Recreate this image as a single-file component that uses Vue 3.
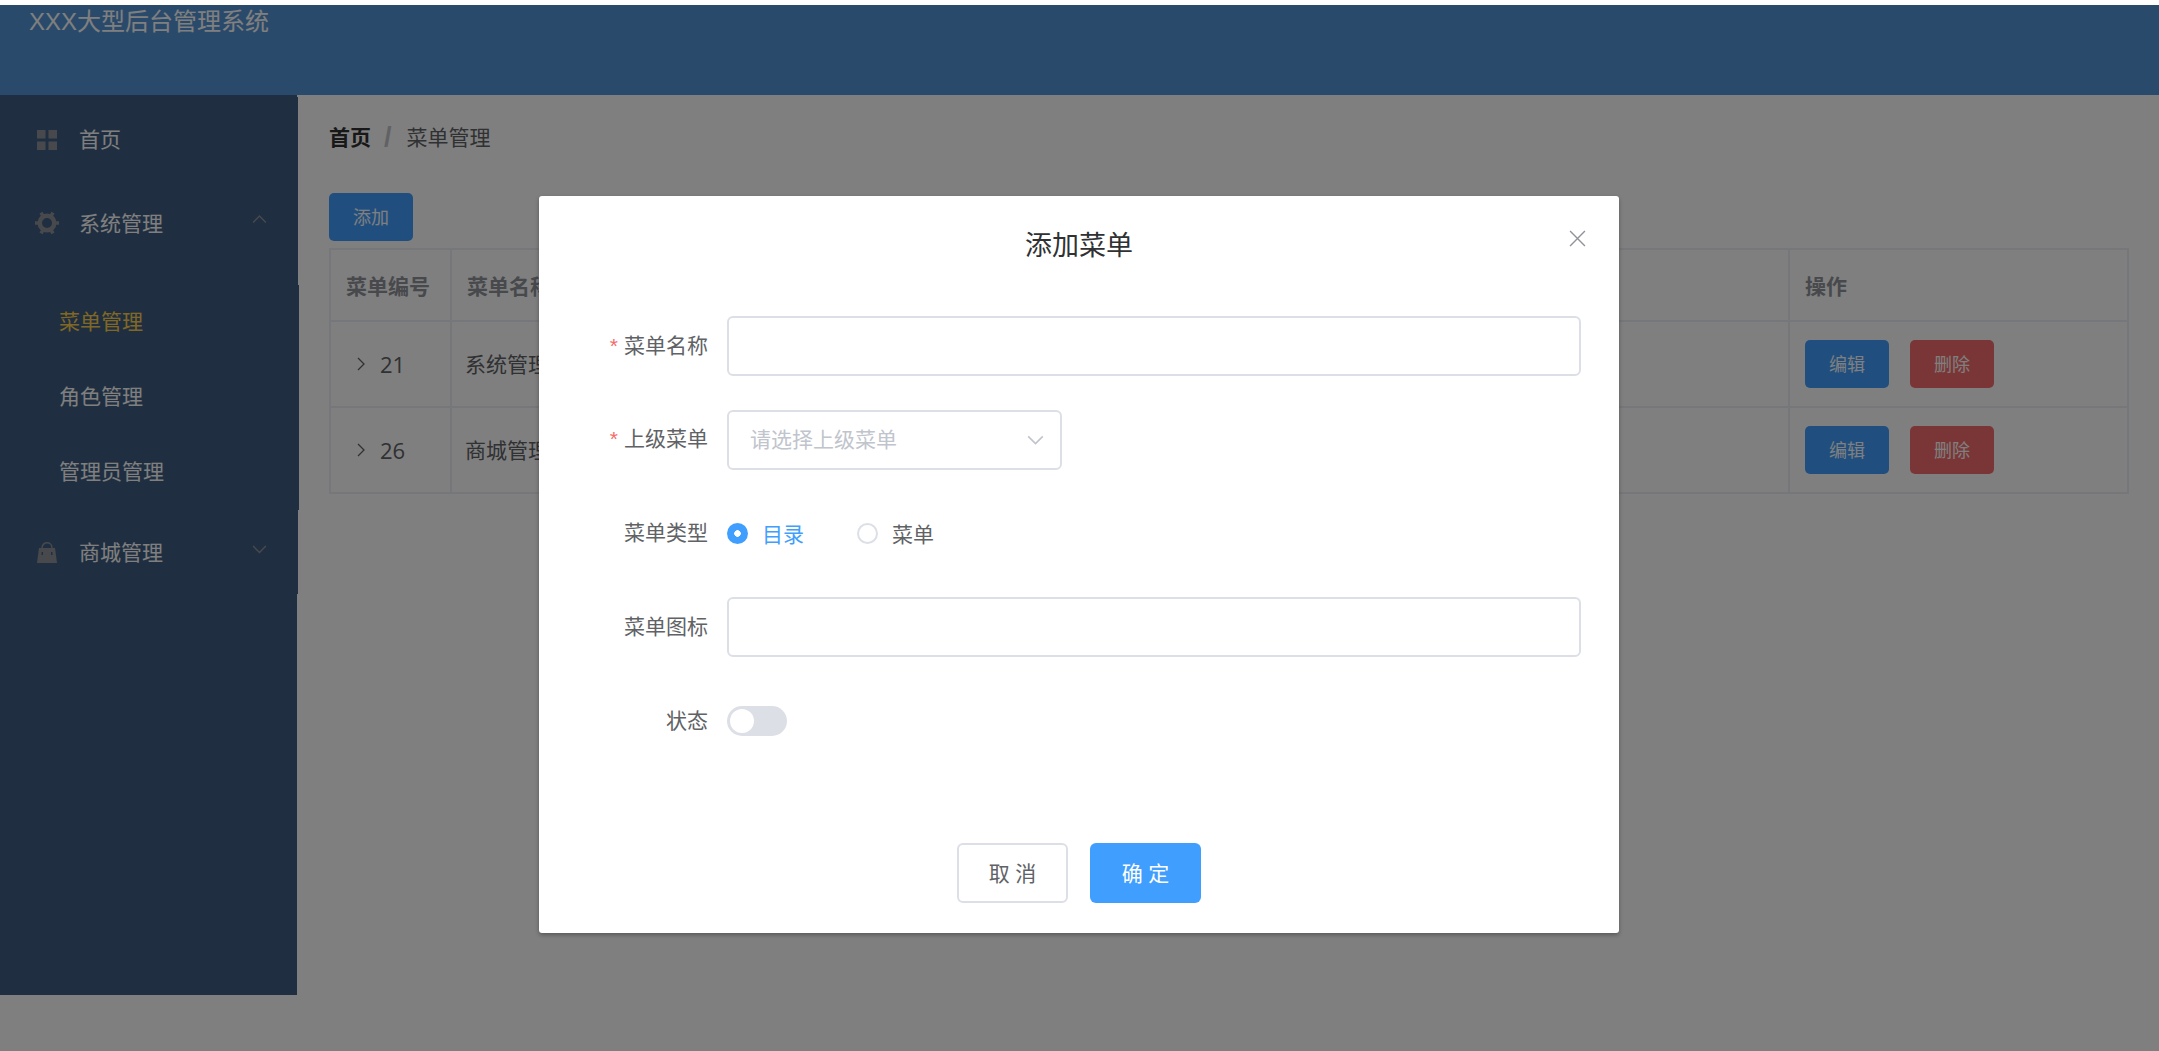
<template>
  <div class="page">
    <header class="topbar">
      <span class="logo">XXX大型后台管理系统</span>
    </header>

    <div class="main">
      <!-- SIDEBAR -->
      <aside class="aside">
        <div class="menu-title">
          <svg class="menu-icon grid" viewBox="0 0 20 20" aria-hidden="true">
            <path d="M0 0h8.500v8.500H0zM11.500 0H20v8.500h-8.500zM0 11.500h8.500V20H0zM11.500 11.500H20V20h-8.500z" />
          </svg>
          <span>首页</span>
        </div>

        <div class="menu-title open">
          <svg class="menu-icon gear" viewBox="0 0 24 24" aria-hidden="true">
            <circle cx="12" cy="12" r="7.250" />
            <line v-for="deg in teeth" :key="deg" x1="19" y1="12" x2="24" y2="12" :transform="`rotate(${deg} 12 12)`" />
          </svg>
          <span>系统管理</span>
          <svg class="arrow" viewBox="0 0 14 8" aria-hidden="true"><path d="M1 7l6-6 6 6" /></svg>
        </div>

        <ul class="submenu">
          <li v-for="item in subMenus" :key="item" :class="{ active: item === '菜单管理' }">{{ item }}</li>
        </ul>

        <div class="menu-title">
          <svg class="menu-icon bag" viewBox="0 0 20 21" aria-hidden="true">
            <path fill-rule="evenodd" d="M2 6h16l2 15H0zM4.500 10v3H6v-3zM14 10v3h1.500v-3z" />
            <path class="handle" d="M5 6C5 2.500 7.500.8 10 .8s5 1.700 5 5.200" />
          </svg>
          <span>商城管理</span>
          <svg class="arrow down" viewBox="0 0 14 8" aria-hidden="true"><path d="M1 1l6 6 6-6" /></svg>
        </div>
      </aside>

      <!-- CONTENT -->
      <main class="content">
        <div class="breadcrumb">
          <b>首页</b>
          <i>/</i>
          <span>菜单管理</span>
        </div>

        <button class="btn small primary add">添加</button>

        <table class="table">
          <colgroup>
            <col class="col-id" />
            <col />
            <col class="col-op" />
          </colgroup>
          <thead>
            <tr>
              <th>菜单编号</th>
              <th>菜单名称</th>
              <th>操作</th>
            </tr>
          </thead>
          <tbody>
            <tr v-for="row in rows" :key="row.id">
              <td>
                <div class="id-cell">
                  <svg class="expand" viewBox="0 0 8 14" aria-hidden="true"><path d="M1 1l6 6-6 6" /></svg>
                  <span>{{ row.id }}</span>
                </div>
              </td>
              <td class="name">{{ row.name }}</td>
              <td>
                <div class="ops">
                  <button class="btn small primary">编辑</button>
                  <button class="btn small danger">删除</button>
                </div>
              </td>
            </tr>
          </tbody>
        </table>
      </main>
    </div>

    <!-- DIALOG -->
    <div class="mask">
      <div class="dialog">
        <div class="dialog-head">
          <span>添加菜单</span>
          <svg class="close" viewBox="0 0 16 16" aria-hidden="true"><path d="M1 1l14 14M15 1L1 15" /></svg>
        </div>

        <form class="form">
          <div class="row">
            <label class="required">菜单名称</label>
            <div class="input"></div>
          </div>
          <div class="row">
            <label class="required">上级菜单</label>
            <div class="input select">
              <span>请选择上级菜单</span>
              <svg viewBox="0 0 14 8" aria-hidden="true"><path d="M1 1l6 6 6-6" /></svg>
            </div>
          </div>
          <div class="row">
            <label>菜单类型</label>
            <div class="radios">
              <span class="radio checked"><i></i><em>目录</em></span>
              <span class="radio"><i></i><em>菜单</em></span>
            </div>
          </div>
          <div class="row">
            <label>菜单图标</label>
            <div class="input"></div>
          </div>
          <div class="row">
            <label>状态</label>
            <span class="switch"><i></i></span>
          </div>
        </form>

        <div class="dialog-foot">
          <button class="btn plain">取 消</button>
          <button class="btn primary">确 定</button>
        </div>
      </div>
    </div>
  </div>
</template>

<script setup>
const subMenus = ['菜单管理', '角色管理', '管理员管理']
const teeth = [0, 60, 120, 180, 240, 300]

const rows = [
  { id: 21, name: '系统管理' },
  { id: 26, name: '商城管理' },
]
</script>

<style scoped>
.page {
  position: relative;
  height: 1051px;
  overflow: hidden;
  background: #fff;
  font-family: "Open Sans", "Noto Sans CJK SC", sans-serif;
  font-size: 21px;
  color: #606266;
}

.topbar {
  height: 90px;
  margin-top: 5px;
  padding-left: 29px;
  background: #5494d6;
  color: #fff;
}
.logo {
  display: block;
  font-family: "Liberation Sans", "Noto Sans CJK SC", sans-serif;
  font-size: 24px;
  line-height: 34px;
}

.main { display: flex; align-items: flex-start; }

/* SIDEBAR */
.aside {
  width: 297px;
  height: 900px;
  flex-shrink: 0;
  background: #3e5e82;
  color: #fff;
}
.menu-title {
  position: relative;
  display: flex;
  align-items: center;
  width: 298px;
  height: 84px;
  padding: 0 0 2px 79px;
  box-sizing: border-box;
  background: #3e5e82;
}
.menu-title:first-child { margin-top: 2px; }
.menu-title.open { height: 104px; padding-bottom: 22px; }
.menu-icon {
  position: absolute;
  left: 37px;
  top: 33px;
  width: 20px;
  height: 20px;
  fill: #909399;
}
.gear {
  left: 35px;
  top: 30px;
  width: 24px;
  height: 24px;
  fill: none;
  stroke: #909399;
  stroke-width: 4.500;
}
.gear line { stroke-width: 3.500; }
.bag { top: 32px; height: 21px; }
.handle { fill: none; stroke: #909399; stroke-width: 1.500; }
.arrow {
  position: absolute;
  left: 252px;
  top: 34px;
  width: 15px;
  height: 8.500px;
  fill: none;
  stroke: #909399;
  stroke-width: 1.300;
}
.arrow.down { top: 35px; }
.submenu {
  width: 299px;
  margin: 0;
  padding: 0;
  background: #3e5e82;
  list-style: none;
}
.submenu li {
  height: 75px;
  padding-left: 59px;
  line-height: 73px;
}
.submenu li.active { color: #ffd04b; }

/* CONTENT */
.content {
  flex: 1;
  min-width: 0;
  padding: 0 30px 0 32px;
}
.breadcrumb {
  display: flex;
  align-items: center;
  height: 30px;
  margin-top: 26px;
}
.breadcrumb b { color: #303133; font-weight: 700; }
.breadcrumb i {
  margin: 2px 15px 0 13px;
  color: #c0c4cc;
  font-family: "Liberation Sans", sans-serif;
  font-size: 27px;
  font-style: normal;
  font-weight: 700;
}
.add { display: block; margin-top: 42px; margin-bottom: 7px; }

.btn {
  box-sizing: border-box;
  width: 111px;
  height: 60px;
  padding: 0 0 2px;
  border: 0;
  border-radius: 6px;
  font-family: inherit;
  font-size: 21px;
  cursor: pointer;
}
.btn.small { width: 84px; height: 48px; padding-bottom: 3px; font-size: 18px; border-radius: 5px; }
.btn.primary { background: #409eff; color: #fff; }
.btn.danger { background: #f56c6c; color: #fff; }
.btn.plain { background: #fff; border: 2px solid #dcdfe6; color: #606266; }

.table {
  width: 1800px;
  table-layout: fixed;
  border-collapse: collapse;
  border: 2px solid #ebeef5;
}
.col-id { width: 121px; }
.col-op { width: 339px; }
.table th, .table td {
  box-sizing: border-box;
  padding: 0 15px;
  border: 2px solid #ebeef5;
  text-align: left;
}
.table th { height: 72px; padding-bottom: 1px; color: #909399; font-weight: 700; }
.table td { height: 86px; }
.table td.name { padding: 0 13px 3px; }
.id-cell { display: flex; align-items: center; gap: 15px; padding: 0 0 1px 11px; }
.id-cell span { font-size: 22px; }
.expand {
  width: 8px;
  height: 14px;
  fill: none;
  stroke: #606266;
  stroke-width: 1.300;
}
.ops { display: flex; gap: 21px; }

/* DIALOG */
.mask {
  position: absolute;
  inset: 5px 0 0;
  background: rgba(0, 0, 0, 0.5);
}
.dialog {
  position: absolute;
  left: 539px;
  top: 191px;
  width: 1080px;
  height: 737px;
  border-radius: 3px;
  background: #fff;
  box-shadow: 0 2px 4px rgba(0, 0, 0, 0.3);
}
.dialog-head {
  position: relative;
  height: 98px;
  text-align: center;
  font-size: 27px;
  line-height: 98px;
  color: #303133;
}
.close {
  position: absolute;
  right: 33px;
  top: 34px;
  width: 17px;
  height: 17px;
  fill: none;
  stroke: #909399;
  stroke-width: 1.300;
}
.form { padding: 22px 38px 0 0; }
.row {
  display: flex;
  align-items: center;
  height: 60px;
  margin-bottom: 33.750px;
}
.row label {
  width: 188px;
  flex-shrink: 0;
  padding: 0 19px 5px 0;
  box-sizing: border-box;
  text-align: right;
}
.row label.required::before {
  content: "*";
  margin-right: 6px;
  color: #f56c6c;
  font-family: "Liberation Sans", sans-serif;
}
.input {
  flex: 1;
  box-sizing: border-box;
  height: 60px;
  border: 2px solid #dcdfe6;
  border-radius: 6px;
}
.select {
  flex: none;
  display: flex;
  align-items: center;
  justify-content: space-between;
  width: 335px;
  padding: 0 16px 0 21px;
  color: #c0c4cc;
}
.select span { margin-top: -4px; }
.select svg {
  width: 17px;
  height: 10px;
  fill: none;
  stroke: #c0c4cc;
  stroke-width: 1.300;
}
.radios { display: flex; gap: 53px; }
.radio { display: flex; align-items: center; gap: 14px; }
.radio em { padding-bottom: 2px; font-style: normal; }
.radio i {
  box-sizing: border-box;
  width: 21px;
  height: 21px;
  border: 2px solid #dcdfe6;
  border-radius: 50%;
}
.radio.checked { color: #409eff; }
.radio.checked i {
  border: 0;
  background: radial-gradient(circle, #fff 0 3px, #409eff 3.500px);
}
.switch {
  display: block;
  width: 60px;
  height: 30px;
  padding: 3px;
  box-sizing: border-box;
  border-radius: 15px;
  background: #dcdfe6;
}
.switch i {
  display: block;
  width: 24px;
  height: 24px;
  border-radius: 50%;
  background: #fff;
}
.dialog-foot {
  display: flex;
  justify-content: center;
  gap: 22px;
  margin-top: 92px;
}
</style>
